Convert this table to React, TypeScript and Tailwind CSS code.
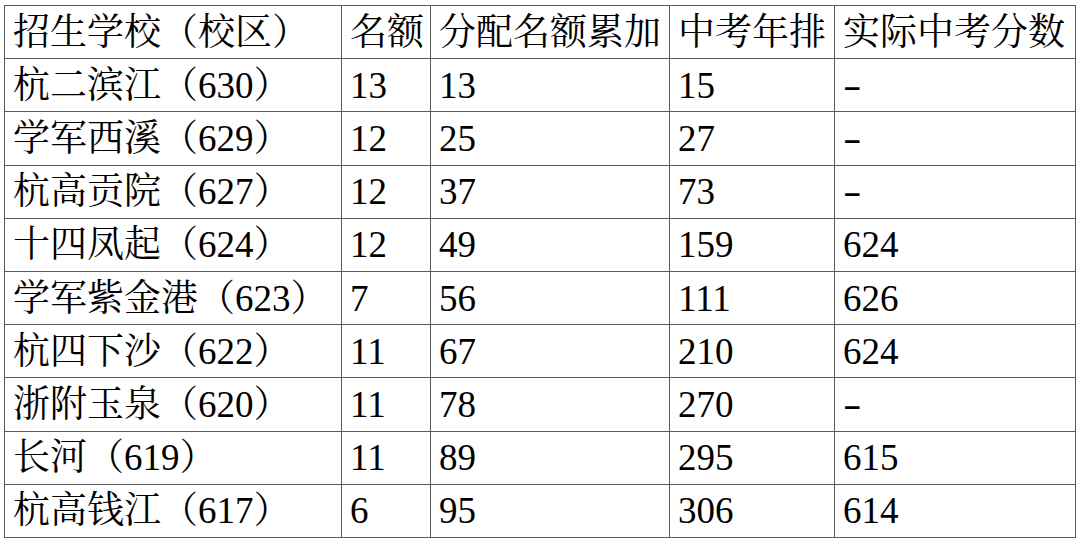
import React from "react";

const header = ["招生学校（校区）", "名额", "分配名额累加", "中考年排", "实际中考分数"];

const rows: string[][] = [
  ["杭二滨江（630）", "13", "13", "15", "-"],
  ["学军西溪（629）", "12", "25", "27", "-"],
  ["杭高贡院（627）", "12", "37", "73", "-"],
  ["十四凤起（624）", "12", "49", "159", "624"],
  ["学军紫金港（623）", "7", "56", "111", "626"],
  ["杭四下沙（622）", "11", "67", "210", "624"],
  ["浙附玉泉（620）", "11", "78", "270", "-"],
  ["长河（619）", "11", "89", "295", "615"],
  ["杭高钱江（617）", "6", "95", "306", "614"],
];

function Cell({ text }: { text: string }) {
  return (
    <div className="flex items-center border-r border-b border-[#5a5a5a] pl-[8px] overflow-hidden whitespace-nowrap">
      {text === "-" ? (
        <span className="inline-block scale-x-150 origin-left">-</span>
      ) : (
        text
      )}
    </div>
  );
}

export default function App() {
  return (
    <div className="w-[1080px] h-[543px] bg-white overflow-hidden font-['Liberation_Serif','Noto_Serif_CJK_SC',serif]">
      <div className="ml-[4px] mt-[5px] w-[1072px] grid grid-cols-[337px_89px_239px_165px_241px] auto-rows-[53.2px] border-l border-t border-[#5a5a5a] text-[37px] leading-none text-black">
        {header.map((h, i) => (
          <Cell key={"h" + i} text={h} />
        ))}
        {rows.map((r, ri) =>
          r.map((c, ci) => <Cell key={ri + "-" + ci} text={c} />)
        )}
      </div>
    </div>
  );
}
